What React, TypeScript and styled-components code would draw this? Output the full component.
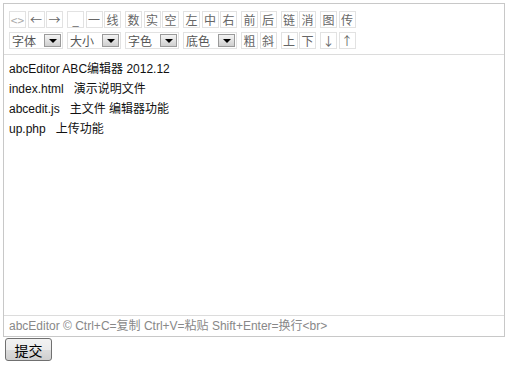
import styled, { createGlobalStyle } from 'styled-components';

const GlobalStyle = createGlobalStyle`
  html, body {
    margin: 0;
    padding: 0;
    background: #fff;
  }
  body {
    margin: 3px;
    font-family: "Liberation Sans", Arial, "Noto Sans CJK SC", sans-serif;
    font-size: 12px;
  }
`;

const latin = `"Liberation Sans", Arial, "Noto Sans CJK SC", sans-serif`;
const cjk = `"Noto Sans CJK SC", "Liberation Sans", sans-serif`;

const Editor = styled.div`
  border: 1px solid #c8c8c8;
  display: flex;
  flex-direction: column;
  box-sizing: border-box;
  width: 502px;
`;

const Toolbar = styled.div`
  display: flex;
  flex-direction: column;
  gap: 4px;
  padding: 7px 5px 5px 5px;
  border-bottom: 1px solid #dcdcdc;
`;

const ToolRow = styled.div`
  display: flex;
  gap: 4px;
`;

const Group = styled.div`
  display: flex;
  gap: 1.5px;
`;

const ToolButton = styled.span<{ $faint?: boolean }>`
  width: 17px;
  height: 17px;
  box-sizing: border-box;
  border: 1px solid #e2e2e2;
  display: flex;
  align-items: center;
  justify-content: center;
  color: ${props => (props.$faint ? '#aaa' : '#666')};
  font-family: ${cjk};
  font-size: 12px;
  line-height: 1;
  background: #fff;
`;

const Select = styled.span`
  width: 54px;
  height: 17px;
  box-sizing: border-box;
  border: 1px solid #e2e2e2;
  display: flex;
  align-items: center;
  justify-content: space-between;
  padding: 0 1px 0 2px;
  color: #555;
  font-family: ${cjk};
  font-size: 12px;
`;

const SelectArrow = styled.span`
  width: 17px;
  height: 13px;
  box-sizing: border-box;
  border: 1px solid #9a9a9a;
  background: linear-gradient(#f4f4f4, #cfcfcf);
  display: flex;
  align-items: center;
  justify-content: center;

  &::after {
    content: '';
    border-left: 4px solid transparent;
    border-right: 4px solid transparent;
    border-top: 4px solid #000;
  }
`;

const Content = styled.div`
  height: 254px;
  padding: 4px 5px 2px 5px;
  color: #111;
  font-family: ${latin};
  font-size: 12px;
  line-height: 20px;
`;

const Line = styled.div`
  white-space: pre;
`;

const StatusBar = styled.div`
  border-top: 1px solid #dcdcdc;
  height: 20px;
  line-height: 20px;
  padding: 0 5px;
  color: #888;
  font-family: ${latin};
  font-size: 12px;
`;

const SubmitButton = styled.button`
  margin: 1px 0 0 2px;
  width: 47px;
  height: 23px;
  border: 1px solid #707070;
  border-radius: 3px;
  background: linear-gradient(#f2f2f2 0%, #ebebeb 50%, #dddddd 51%, #cfcfcf 100%);
  font-family: ${cjk};
  font-size: 14px;
  color: #000;
  padding: 0;
`;

const row1 = [
  ['<>', '←', '→'],
  ['_', '一', '线'],
  ['数', '实', '空'],
  ['左', '中', '右'],
  ['前', '后'],
  ['链', '消'],
  ['图', '传'],
];

const selects = ['字体', '大小', '字色', '底色'];

const row2 = [
  ['粗', '斜'],
  ['上', '下'],
  ['↓', '↑'],
];

export default function App() {
  return (
    <>
      <GlobalStyle />
      <Editor>
        <Toolbar>
          <ToolRow>
            {row1.map((g, i) => (
              <Group key={i}>
                {g.map(b => (
                  <ToolButton key={b} $faint={b === '<>'}>{b}</ToolButton>
                ))}
              </Group>
            ))}
          </ToolRow>
          <ToolRow>
            {selects.map(s => (
              <Group key={s}>
                <Select>
                  {s}
                  <SelectArrow />
                </Select>
              </Group>
            ))}
            {row2.map((g, i) => (
              <Group key={i}>
                {g.map(b => (
                  <ToolButton key={b}>{b}</ToolButton>
                ))}
              </Group>
            ))}
          </ToolRow>
        </Toolbar>
        <Content>
          <Line>abcEditor ABC编辑器 2012.12</Line>
          <Line>index.html   演示说明文件</Line>
          <Line>abcedit.js   主文件 编辑器功能</Line>
          <Line>up.php   上传功能</Line>
        </Content>
        <StatusBar>abcEditor © Ctrl+C=复制 Ctrl+V=粘贴 Shift+Enter=换行&lt;br&gt;</StatusBar>
      </Editor>
      <SubmitButton>提交</SubmitButton>
    </>
  );
}
